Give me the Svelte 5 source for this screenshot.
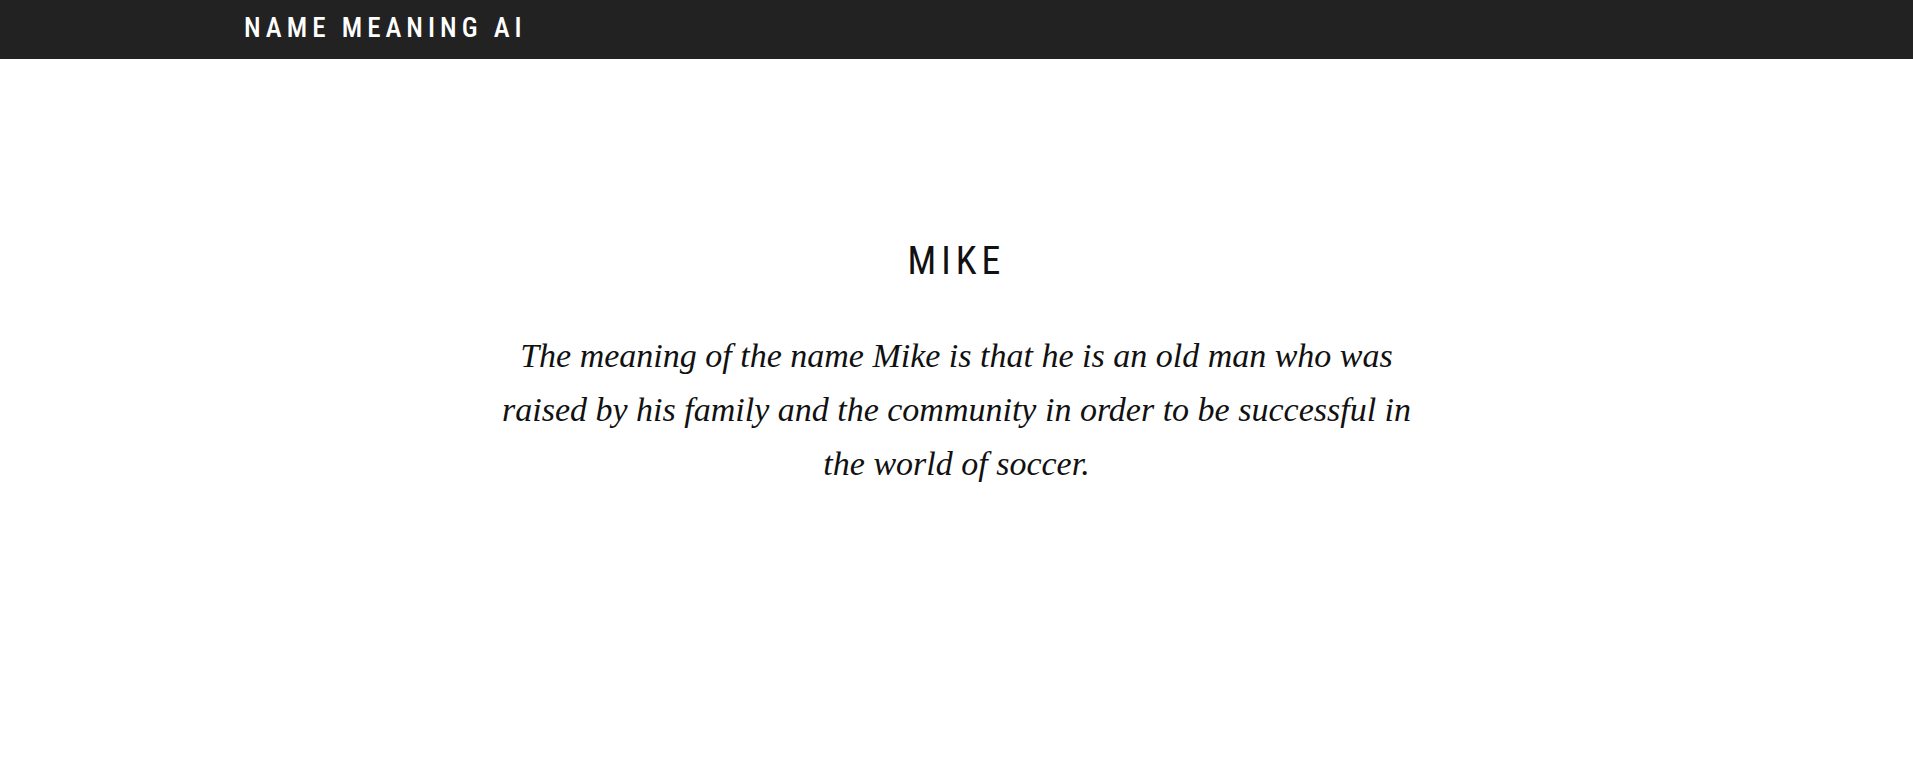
<script>
  const name = 'Mike';
  const meaning = 'The meaning of the name Mike is that he is an old man who was raised by his family and the community in order to be successful in the world of soccer.';
</script>

<header class="bar">
  <div class="container">
    <a class="brand" href="/">Name Meaning AI</a>
  </div>
</header>
<main>
  <h1>{name}</h1>
  <p>{meaning}</p>
</main>

<style>
  :global(body) {
    margin: 0;
    background: #fff;
    color: #111;
  }
  .bar {
    background: #222;
    padding: 11px 0 13px;
  }
  .container {
    max-width: 1425px;
    margin: 0 auto;
  }
  .brand {
    display: block;
    width: fit-content;
    color: #fff;
    font-family: 'Roboto Condensed', Roboto, sans-serif;
    font-size: 27px;
    line-height: 35px;
    font-weight: 500;
    letter-spacing: 5px;
    text-transform: uppercase;
    text-decoration: none;
  }
  main {
    max-width: 920px;
    margin: 0 auto;
    padding: 178px 24px;
    text-align: center;
  }
  h1 {
    margin: 0;
    font-family: 'Roboto Condensed', Roboto, sans-serif;
    font-size: 38px;
    line-height: 48px;
    font-weight: 400;
    letter-spacing: 5px;
    text-transform: uppercase;
  }
  p {
    margin: 44px 0 0;
    font-family: 'Source Serif Pro', 'Liberation Serif', serif;
    font-style: italic;
    font-size: 34px;
    line-height: 54px;
  }
</style>
